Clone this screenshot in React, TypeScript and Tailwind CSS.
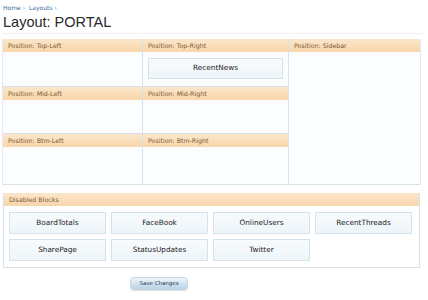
import React from "react";

const font = { fontFamily: '"DejaVu Sans", Verdana, sans-serif' };

function Header({ children }: { children: React.ReactNode }) {
  return (
    <div className="h-[13px] flex items-center px-[5px] text-[6.3px] text-[#7a5733] bg-gradient-to-b from-[#fbe6cb] to-[#f8d6aa]">
      {children}
    </div>
  );
}

function Block({ name }: { name: string }) {
  return (
    <div className="h-[22px] flex items-center justify-center border border-[#d5e2ea] bg-gradient-to-b from-[#f8fbfd] to-[#edf5f9] text-[7.3px] text-[#222]">
      {name}
    </div>
  );
}

function Cell({ title, h, children }: { title: string; h: number; children?: React.ReactNode }) {
  return (
    <div className="flex flex-col border-r border-b border-[#d5e2ea]">
      <Header>{title}</Header>
      <div className="bg-[#fcfdff]" style={{ height: h }}>
        {children}
      </div>
    </div>
  );
}

export default function App() {
  return (
    <div className="w-[428px] h-[300px] bg-white overflow-hidden" style={font}>
      <div className="pl-[3px] pt-[3px] text-[6px] text-[#3b6b98] flex gap-[4px]">
        <span>Home ›</span>
        <span>Layouts ›</span>
      </div>
      <div
        className="pl-[3px] pt-[1px] text-[14.5px] leading-[18px] text-[#2a2a2a]"
        style={{ fontFamily: '"Liberation Sans", Arial, sans-serif' }}
      >
        Layout: PORTAL
      </div>
      <div className="mx-[3px] mt-[2px] h-px bg-[#eef2f5]" />

      <div className="ml-[2px] mt-[5px] w-[419px] border-x border-[#e3ebf0] grid grid-cols-[140px_146px_1fr]">
        <div className="col-start-1 row-start-1">
          <Cell title="Position: Top-Left" h={34} />
        </div>
        <div className="col-start-2 row-start-1">
          <Cell title="Position: Top-Right" h={34}>
            <div className="px-[5px] pt-[6px]">
              <div className="h-[21px] flex items-center justify-center border border-[#d5e2ea] bg-gradient-to-b from-[#f8fbfd] to-[#edf5f9] text-[7.3px] text-[#222]">
                RecentNews
              </div>
            </div>
          </Cell>
        </div>
        <div className="col-start-3 row-start-1 row-span-3 flex flex-col border-b border-[#d5e2ea]">
          <Header>Position: Sidebar</Header>
          <div className="flex-1 bg-[#fcfdff]" />
        </div>
        <div className="col-start-1 row-start-2">
          <Cell title="Position: Mid-Left" h={33} />
        </div>
        <div className="col-start-2 row-start-2">
          <Cell title="Position: Mid-Right" h={33} />
        </div>
        <div className="col-start-1 row-start-3">
          <Cell title="Position: Btm-Left" h={37} />
        </div>
        <div className="col-start-2 row-start-3">
          <Cell title="Position: Btm-Right" h={37} />
        </div>
      </div>

      <div className="ml-[3px] mt-[8px] w-[417px] border-x border-b border-[#d5e2ea]">
        <Header>Disabled Blocks</Header>
        <div className="grid grid-cols-[97px_97px_97px_97px] gap-[5px] px-[5px] pt-[6px] pb-[6px]">
          <Block name="BoardTotals" />
          <Block name="FaceBook" />
          <Block name="OnlineUsers" />
          <Block name="RecentThreads" />
          <Block name="SharePage" />
          <Block name="StatusUpdates" />
          <Block name="Twitter" />
        </div>
      </div>

      <div className="mt-[9px] pl-[130px]">
        <div className="w-[58px] h-[13px] rounded-[4px] flex items-center justify-center text-[5.5px] text-[#1f3b5a] bg-gradient-to-b from-[#eef5fa] to-[#b9d2e4] border border-[#c2d6e4] shadow-[0_1px_1px_rgba(0,0,0,0.15)]">
          Save Changes
        </div>
      </div>
    </div>
  );
}
